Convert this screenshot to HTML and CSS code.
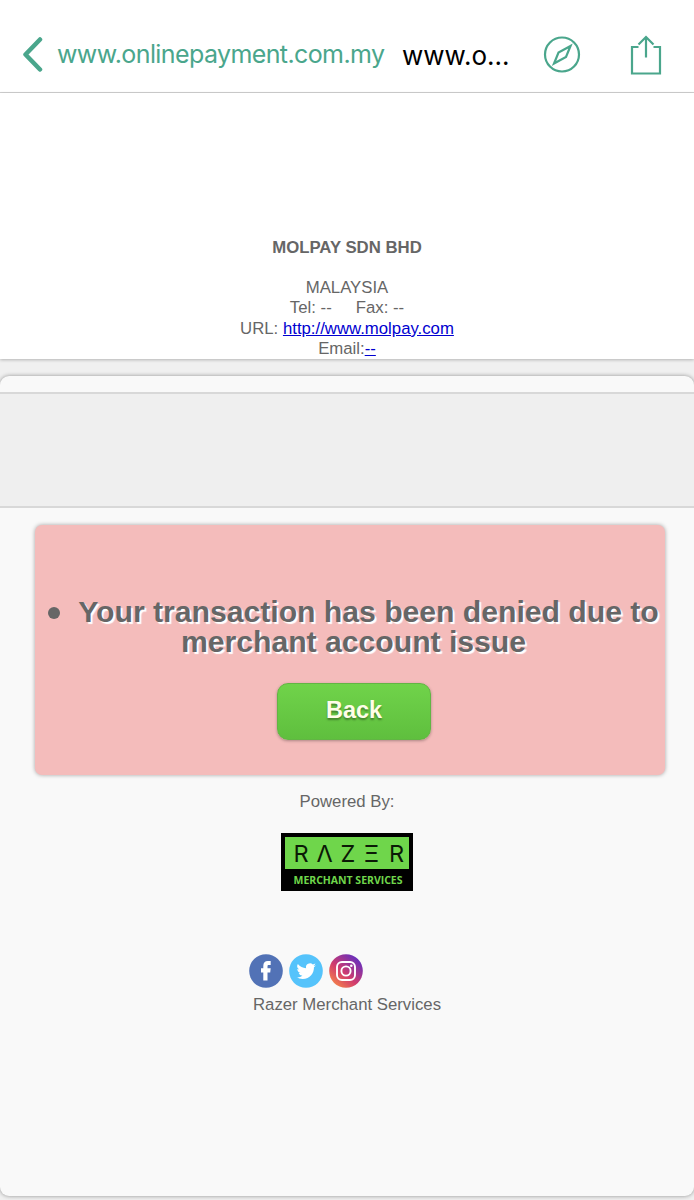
FILE: index.html
```html
<!DOCTYPE html>
<html lang="en">
<head>
    <meta charset="UTF-8">
    <meta name="viewport" content="width=device-width, initial-scale=1.0">
    <title>Payment</title>
    <link rel="stylesheet" href="styles.css">
</head>
<body>
    <!-- browser bar -->
    <header class="navbar">
        <a class="back-link" href="#">
            <svg class="chevron" width="22" height="38" viewBox="0 0 22 38"><path d="M19 4.500L4.500 19.500l14.500 15"/></svg>
            <span class="site">www.onlinepayment.com.my</span>
        </a>
        <span class="page-title">www.o...</span>
        <svg class="icon compass" width="38" height="38" viewBox="0 0 38 38">
            <circle cx="19" cy="19.500" r="17"/>
            <path d="M27.500 11l-4.500 11-12 6.500 4.500-11z"/>
        </svg>
        <svg class="icon share" width="32" height="42" viewBox="0 0 32 42">
            <path d="M8.500 14H2v26.500h28V14h-6.500M16 24.500V4M8.500 11.500L16 4l7.500 7.500"/>
        </svg>
    </header>

    <div class="merchant">
        <h1>MOLPAY SDN BHD</h1>
        <p>MALAYSIA</p>
        <p class="phones"><span>Tel: --</span><span>Fax: --</span></p>
        <p>URL: <a href="#">http://www.molpay.com</a></p>
        <p>Email:<a href="#">--</a></p>
    </div>

    <div class="page">
        <div class="band"></div>
        <div class="error">
            <ul>
                <li>Your transaction has been denied due to<br>merchant account issue</li>
            </ul>
            <button type="button">Back</button>
        </div>
        <p class="powered">Powered By:</p>
        <svg class="logo" width="132" height="58" viewBox="0 0 132 58">
            <rect width="132" height="58" fill="#000"/>
            <rect x="4" y="4" width="124" height="32" fill="#6fd64b"/>
            <g class="razer">
                <text x="20" y="28.500">R</text>
                <text x="43.500" y="28.500">Λ</text>
                <text x="67" y="28.500">Z</text>
                <text x="90.500" y="28.500">Ξ</text>
                <text x="115.500" y="28.500">R</text>
            </g>
            <text class="services" x="12.500" y="51" textLength="109">MERCHANT SERVICES</text>
        </svg>
        <div class="social">
            <svg width="34" height="34" viewBox="0 0 34 34">
                <circle cx="17" cy="17" r="16.800" fill="#5272b6"/>
                <path fill="#fff" d="M14.300 26.500V18.500H12v-4.300h2.300v-2.300c0-3.200 1.700-4.800 4.500-4.800h2.900v4h-1.900c-1 0-1.300.5-1.300 1.400v1.700h3.200l-.5 4.300h-2.700v8z"/>
            </svg>
            <svg width="34" height="34" viewBox="0 0 34 34">
                <circle cx="17" cy="17" r="16.800" fill="#55c3fb"/>
                <path fill="#fff" transform="translate(7.500 7.500) scale(.81)" d="M24 4.560a10 10 0 0 1-2.830.78 4.900 4.900 0 0 0 2.170-2.720 9.900 9.900 0 0 1-3.130 1.190 4.920 4.920 0 0 0-8.380 4.480A14 14 0 0 1 1.670 3.150a4.900 4.900 0 0 0 1.520 6.570 4.900 4.900 0 0 1-2.230-.61c-.05 2.280 1.580 4.410 3.950 4.890a5 5 0 0 1-2.220.08 4.930 4.930 0 0 0 4.600 3.420A9.900 9.900 0 0 1 0 19.540a14 14 0 0 0 7.550 2.210c9.140 0 14.300-7.720 13.990-14.640A10 10 0 0 0 24 4.560z"/>
            </svg>
            <svg width="34" height="34" viewBox="0 0 34 34">
                <defs>
                    <linearGradient id="insta" x1=".15" y1=".85" x2=".8" y2=".1">
                        <stop offset="0" stop-color="#f0794f"/>
                        <stop offset=".4" stop-color="#d23c6c"/>
                        <stop offset="1" stop-color="#6a2fbb"/>
                    </linearGradient>
                </defs>
                <circle cx="17" cy="17" r="16.800" fill="url(#insta)"/>
                <g fill="none" stroke="#fff" stroke-width="1.900">
                    <rect x="8" y="8" width="18" height="18" rx="5"/>
                    <circle cx="17" cy="17" r="4.600"/>
                </g>
                <circle cx="22.300" cy="11.800" r="1.300" fill="#fff"/>
            </svg>
        </div>
        <p class="footer">Razer Merchant Services</p>
    </div>
</body>
</html>
```
FILE: styles.css
```css
*{box-sizing: border-box;}
html{background-color: #f0f0f0;}
body{
    margin: 0;
    height: 1200px;
    overflow: hidden;
    font: 16.750px/20px "Liberation Sans", Arial, sans-serif;
    color: #666;
    text-align: center;
}
p, h1, ul{margin: 0; padding: 0;}
svg{display: block; flex: none;}

/* browser bar */
.navbar{
    display: flex;
    height: 93px;
    padding: 16px 32px 0 21px;
    align-items: center;
    background-color: #fff;
    border-bottom: 1px solid #d2d2d2;
    font-family: Inter, "Liberation Sans", sans-serif;
    white-space: nowrap;
}
.back-link{
    display: flex;
    align-items: center;
    color: #4aa68c;
    text-decoration: none;
}
.chevron{fill: none; stroke: #4aa68c; stroke-width: 4.500; stroke-linecap: round; stroke-linejoin: round;}
.site{
    width: 344px;
    padding-left: 14px;
    text-align: left;
    font-size: 25px;
    letter-spacing: -.6px;
}
.page-title{width: 142px; padding: 4px 0 0 15px; text-align: left; font-size: 26px; color: #000;}
.icon{fill: none; stroke: #4aa68c; stroke-width: 2.200;}
.compass{margin-left: 14px;}
.share{margin-left: auto;}

/* merchant details */
.merchant{
    height: 266px;
    padding-top: 145px;
    background-color: #fff;
    box-shadow: 0 1px 3px rgba(0,0,0,.25);
}
.merchant h1{margin-bottom: 20px; font-size: 16.750px; line-height: 20px;}
.merchant p{line-height: 20.300px;}
.merchant a{color: #0000d0;}
.phones{display: flex; justify-content: center; gap: 24px;}

.page{
    height: 820px;
    margin-top: 17px;
    padding-top: 16px;
    background-color: #f9f9f9;
    border-radius: 9px;
    box-shadow: 0 0 4px rgba(0,0,0,.4);
}
.band{
    height: 116px;
    background-color: #efefef;
    border-top: 2px solid #d8d8d8;
    border-bottom: 2px solid #d8d8d8;
}
.error{
    width: 630px;
    height: 250px;
    margin: 17px 0 0 35px;
    padding: 72px 0 0;
    background-color: #f4bcbb;
    border-radius: 7px;
    box-shadow: 0 0 4px rgba(0,0,0,.35);
}
.error ul{
    padding-left: 7px;
    list-style: none;
    font-size: 30.150px;
    font-weight: bold;
    line-height: 30px;
    text-shadow: 2px 2px 1px #fff;
    white-space: nowrap;
}
.error li::before{
    content: "";
    display: inline-block;
    width: 12px;
    height: 12px;
    margin-right: 18px;
    border-radius: 50%;
    background-color: #666;
    vertical-align: 3px;
}
.error button{
    display: block;
    width: 154px;
    height: 57px;
    margin: 26px 0 0 242px;
    padding: 0 0 3px;
    border: 1px solid #62b544;
    border-radius: 11px;
    background: linear-gradient(#70d34a, #5fbf3e);
    box-shadow: 0 1px 3px rgba(0,0,0,.3);
    font: bold 23.500px "Liberation Sans", Arial, sans-serif;
    color: #fffde8;
    text-shadow: 0 2px 2px rgba(0,0,0,.35);
}
.powered{margin-top: 17px;}
.logo{margin: 21px 0 0 281px;}
.razer{font: 23.500px Inter, sans-serif; fill: #0b1a06; text-anchor: middle;}
.services{font: bold 10.500px "Open Sans", sans-serif; fill: #6fd64b;}
.social{
    display: flex;
    gap: 6px;
    margin: 63px 0 0 249px;
}
.footer{margin-top: 7px;}
```
